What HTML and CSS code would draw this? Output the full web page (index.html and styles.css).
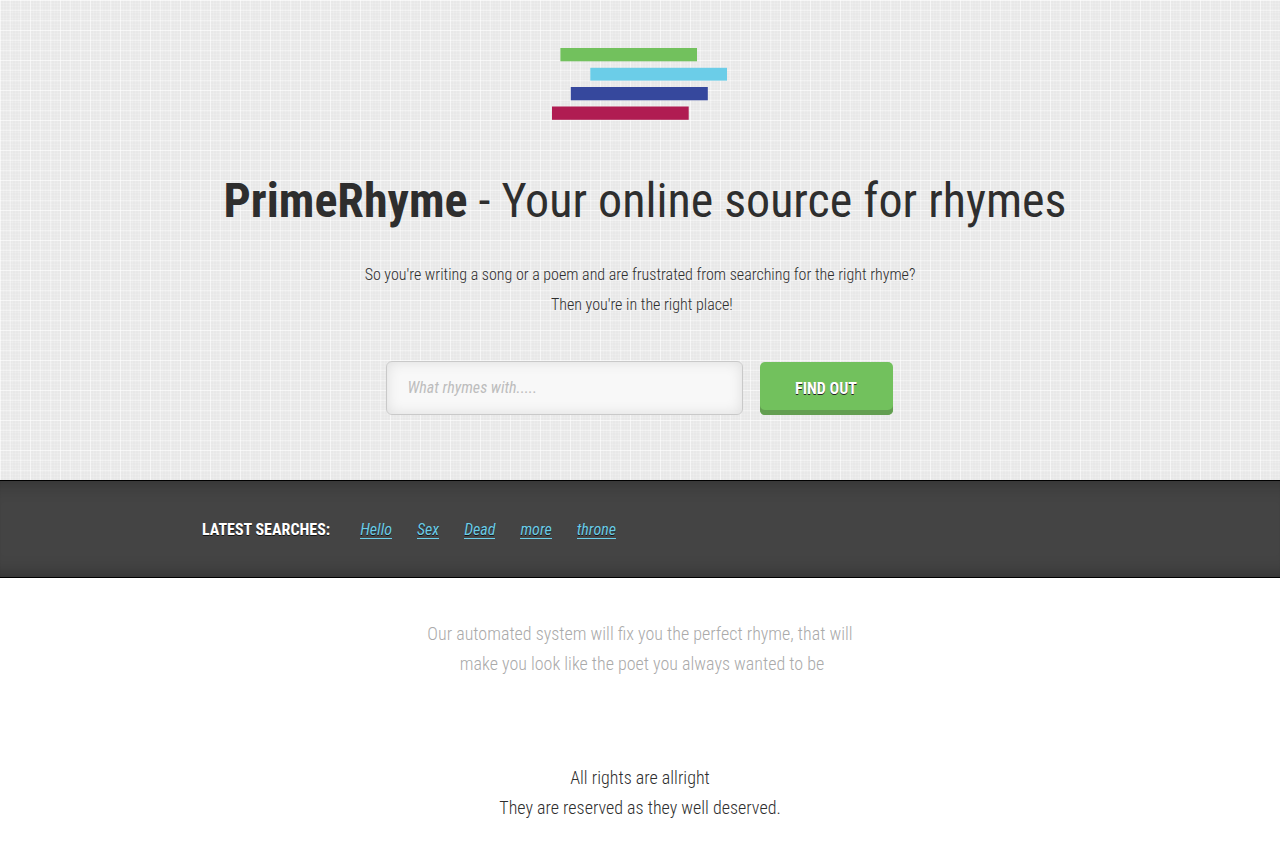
FILE: index.html
```
<!DOCTYPE html>
<html lang="en">
<head>
    <meta charset="UTF-8">
    <meta name="viewport" content="width=device-width, initial-scale=1.0">
    <title>PrimeRhyme - Your online source for rhymes</title>
    <link rel="stylesheet" href="styles.css">
</head>
<body>
    <header class="hero">
        <svg class="logo" viewBox="0 0 176 72" role="img" aria-label="PrimeRhyme">
            <rect x="8.4" y="0" width="136.6" height="13.3" fill="#72c15d"/>
            <rect x="38.3" y="19.8" width="136.7" height="12.8" fill="#6bcde8"/>
            <rect x="18.8" y="39" width="137" height="13.3" fill="#36489d"/>
            <rect x="0" y="58.5" width="136.7" height="13.3" fill="#b01c52"/>
        </svg>
        <h1><strong>PrimeRhyme</strong> - Your online source for rhymes</h1>
        <p class="intro">So you're writing a song or a poem and are frustrated from searching for the right rhyme?<br>
        &nbsp;Then you're in the right place!</p>
        <form class="search-form">
            <input type="text" name="word" placeholder="What rhymes with....." aria-label="What rhymes with">
            <button type="submit">FIND OUT</button>
        </form>
    </header>

    <section class="latest">
        <div class="container">
            <h2>LATEST SEARCHES:</h2>
            <ul>
                <li><a href="#">Hello</a></li>
                <li><a href="#">Sex</a></li>
                <li><a href="#">Dead</a></li>
                <li><a href="#">more</a></li>
                <li><a href="#">throne</a></li>
            </ul>
        </div>
    </section>

    <p class="tagline">Our automated system will fix you the perfect rhyme, that will<br>
    &nbsp;make you look like the poet you always wanted to be</p>

    <footer>
        <p>All rights are allright<br>
        They are reserved as they well deserved.</p>
    </footer>
</body>
</html>
```
FILE: styles.css
```
* {
    margin: 0;
    padding: 0;
    box-sizing: border-box;
}

body {
    font-family: "Roboto Condensed", Roboto, sans-serif;
    font-size: 18px;
    font-weight: 300;
    line-height: 30px;
    color: #2e2e2e;
    background-color: #fff;
}

/* paper grid */
.hero {
    display: flex;
    flex-direction: column;
    align-items: center;
    padding: 48px 20px 65px;
    text-align: center;
    background-color: #e8e8e8;
    background-image:
        linear-gradient(to right, rgba(255, 255, 255, 0.4) 1px, transparent 1px),
        linear-gradient(to bottom, rgba(255, 255, 255, 0.4) 1px, transparent 1px),
        linear-gradient(to right, rgba(255, 255, 255, 0.25) 1px, transparent 1px),
        linear-gradient(to bottom, rgba(255, 255, 255, 0.25) 1px, transparent 1px),
        linear-gradient(to right, rgba(255, 255, 255, 0.15) 1px, transparent 1px),
        linear-gradient(to bottom, rgba(255, 255, 255, 0.15) 1px, transparent 1px);
    background-size: 10px 10px, 10px 10px, 30px 30px, 30px 30px, 3px 3px, 3px 3px;
}

.logo {
    width: 176px;
    height: 72px;
}

h1 {
    margin-top: 51px;
    padding-left: 10px;
    font-size: 48px;
    font-weight: 400;
    line-height: 60px;
}

.intro {
    margin-top: 29px;
    font-size: 16px;
}

.search-form {
    display: flex;
    gap: 17px;
    margin-top: 41px;
    padding-right: 2px;
}

.search-form input {
    width: 357px;
    height: 54px;
    padding: 0 21px 2px;
    font: italic 400 16px "Roboto Condensed", Roboto, sans-serif;
    color: #2e2e2e;
    background-color: #f8f8f8;
    border: 1px solid #c9c9c9;
    border-radius: 6px;
    box-shadow: inset 0 0 14px rgba(0, 0, 0, 0.11);
    outline: none;
}

.search-form input::placeholder {
    color: #bdbdbd;
    opacity: 1;
}

.search-form button {
    width: 133px;
    height: 53px;
    margin-top: 1px;
    font: bold 16px "Roboto Condensed", Roboto, sans-serif;
    color: #fff;
    text-shadow: 0 1px 0 #222;
    background-color: #72c15d;
    border: none;
    border-radius: 5px;
    box-shadow: inset 0 -5px 0 #639e51;
    cursor: pointer;
}

.latest {
    padding: 34px 20px 32px;
    background-color: #444;
    border-top: 1px solid #000;
    border-bottom: 1px solid #000;
    box-shadow: inset 0 20px 18px -18px rgba(0, 0, 0, 0.3), inset 0 -20px 18px -18px rgba(0, 0, 0, 0.3);
}

.container {
    display: flex;
    gap: 30px;
    max-width: 876px;
    margin: 0 auto;
    font-size: 16px;
    text-shadow: 0 1px 0 #111;
}

h2 {
    font-size: 16px;
    font-weight: bold;
    color: #fff;
}

.latest ul {
    display: flex;
    gap: 25px;
    list-style: none;
}

.latest a {
    display: block;
    height: 24px;
    font-style: italic;
    font-weight: 400;
    color: #6bcde8;
    text-decoration: none;
    border-bottom: 1px solid #6bcde8;
}

.tagline {
    padding: 41px 20px 0;
    text-align: center;
    color: #aaa;
}

footer {
    padding: 84px 20px 43px;
    text-align: center;
}
```
